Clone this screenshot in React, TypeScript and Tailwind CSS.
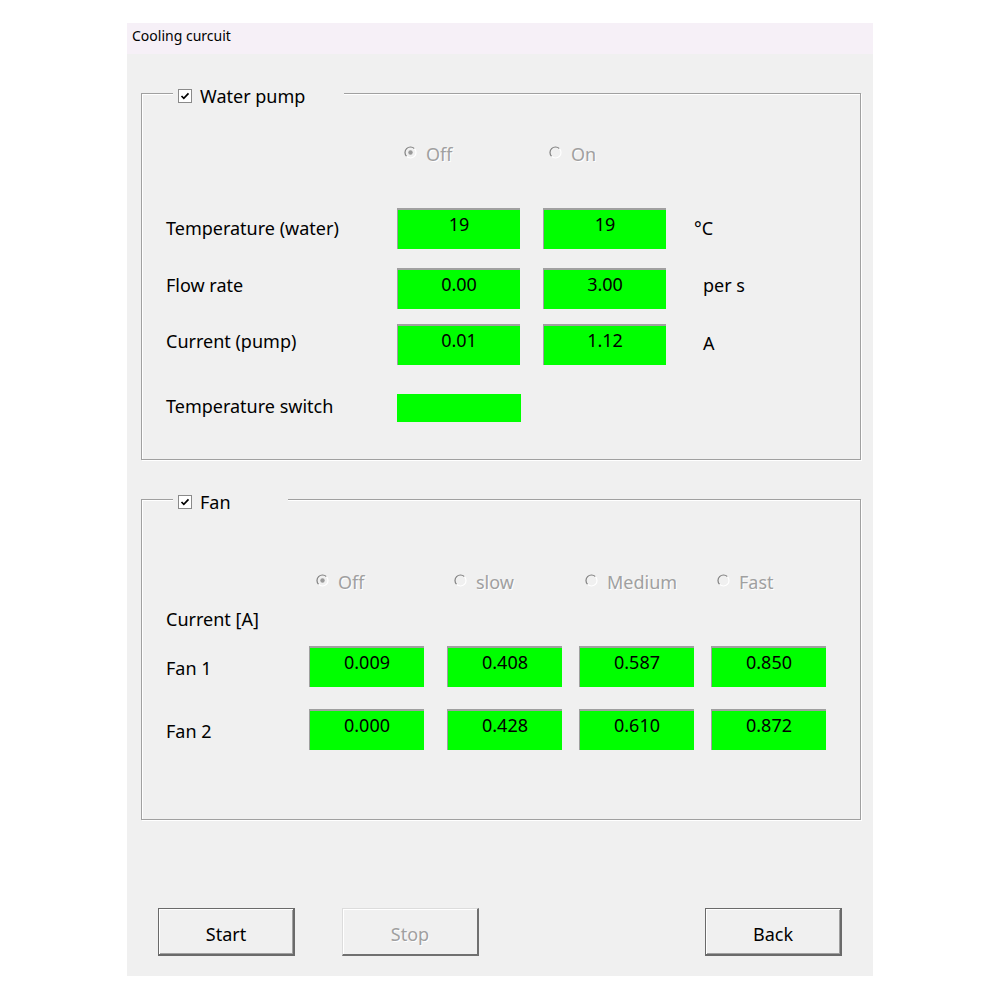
import React from 'react'

const FONT = "font-['Noto_Sans','Open_Sans',sans-serif]"

function Radio({ label, checked = false }: { label: string; checked?: boolean }) {
  return (
    <div className="flex items-center gap-[9px] text-[18px] leading-[24px] text-[#a0a0a0] [text-shadow:1px_1px_0_#fff]">
      <svg width="13" height="13" viewBox="0 0 13 13" className="-mt-[4px]">
        <circle cx="6.5" cy="6.5" r="5.5" fill="#f0f0f0" />
        <path d="M2.6 10.4 A5.5 5.5 0 0 1 10.4 2.6" fill="none" stroke="#808080" strokeWidth="1.2" />
        <path d="M10.4 2.6 A5.5 5.5 0 0 1 2.6 10.4" fill="none" stroke="#ffffff" strokeWidth="1.2" />
        {checked && <circle cx="6.5" cy="6.5" r="2.2" fill="#9a9a9a" />}
      </svg>
      <span>{label}</span>
    </div>
  )
}

function CheckBox() {
  return (
    <svg width="14" height="14" viewBox="0 0 14 14">
      <rect x="0.5" y="0.5" width="13" height="13" fill="#fff" stroke="#8a8a8a" />
      <path d="M3.5 7 L5.8 9.3 L10.5 4.3" fill="none" stroke="#000" strokeWidth="1.7" />
    </svg>
  )
}

function GroupBox({ title, legendW, h, children }: { title: string; legendW: string; h: string; children: React.ReactNode }) {
  return (
    <div className={`relative ${h} border border-[#a0a0a0] shadow-[1px_1px_0_#fff,inset_1px_1px_0_#fff]`}>
      <div className={`absolute -top-[10px] left-[31px] ${legendW} bg-[#f0f0f0] flex items-center gap-[8px] pl-[5px] text-[18px] leading-[24px] text-black`}>
        <CheckBox />
        <span>{title}</span>
      </div>
      {children}
    </div>
  )
}

function Box({ value, w, h = 'h-[41px]' }: { value?: string; w: string; h?: string }) {
  return (
    <div className={`${w} ${h} bg-[#00ff00] border-t-2 border-l border-[#a0a0a0] flex justify-center pt-[2px] text-[18px] leading-[24px] text-black`}>
      {value}
    </div>
  )
}

function Button({ label, disabled = false }: { label: string; disabled?: boolean }) {
  return (
    <button
      className={`w-[137px] h-[48px] bg-[#f0f0f0] pt-[5px] text-[18px] border-t border-l border-b-2 border-r-2 ${
        disabled
          ? 'border-t-[#dcdcdc] border-l-[#dcdcdc] border-b-[#707070] border-r-[#707070] text-[#a0a0a0] [text-shadow:1px_1px_0_#fff] shadow-[inset_1px_1px_0_#fff]'
          : 'border-[#6a6a6a] text-black shadow-[inset_1px_1px_0_#fff,inset_-1px_-1px_0_#a0a0a0]'
      }`}
    >
      {label}
    </button>
  )
}

const pumpRows = [
  { label: 'Temperature (water)', a: '19', b: '19', unit: '°C', unitCls: 'ml-[28px] -mt-[1px]', labelCls: '-mt-[1px]', mt: 'mt-[0px]' },
  { label: 'Flow rate', a: '0.00', b: '3.00', unit: 'per s', unitCls: 'ml-[37px] -mt-[7px]', labelCls: '-mt-[7px]', mt: 'mt-[19px]' },
  { label: 'Current (pump)', a: '0.01', b: '1.12', unit: 'A', unitCls: 'ml-[37px] -mt-[3px]', labelCls: '-mt-[7px]', mt: 'mt-[15px]' },
]

const fanRows = [
  { label: 'Fan 1', values: ['0.009', '0.408', '0.587', '0.850'], mt: 'mt-[0px]' },
  { label: 'Fan 2', values: ['0.000', '0.428', '0.610', '0.872'], mt: 'mt-[22px]' },
]

export default function App() {
  return (
    <div className={`w-[1000px] h-[1000px] bg-white pt-[23px] pl-[127px] ${FONT}`}>
      <div className="w-[746px] h-[953px] bg-[#f0f0f0] flex flex-col">
        <div className="h-[31px] bg-[#f6f0f7] pl-[5px] pt-[3px] text-[14px] leading-[20px] text-black">
          Cooling curcuit
        </div>

        <div className="pl-[14px] pr-[12px] pt-[39px]">
          <GroupBox title="Water pump" legendW="w-[171px]" h="h-[367px]">
            <div className="flex pl-[262px] pt-[48px]">
              <div className="w-[145px]">
                <Radio label="Off" checked />
              </div>
              <Radio label="On" />
            </div>

            <div className="mt-[42px]">
              {pumpRows.map((r) => (
                <div key={r.label} className={`flex items-center h-[41px] ${r.mt} text-[18px] leading-[24px] text-black`}>
                  <div className={`w-[255px] pl-[24px] ${r.labelCls}`}>{r.label}</div>
                  <Box value={r.a} w="w-[123px]" />
                  <div className="w-[23px]" />
                  <Box value={r.b} w="w-[123px]" />
                  <div className={r.unitCls}>{r.unit}</div>
                </div>
              ))}
              <div className="flex items-center h-[28px] mt-[29px] text-[18px] leading-[24px] text-black">
                <div className="w-[255px] pl-[24px] -mt-[4px]">Temperature switch</div>
                <div className="w-[124px] h-[28px] bg-[#00ff00]" />
              </div>
            </div>
          </GroupBox>

          <div className="mt-[39px]">
            <GroupBox title="Fan" legendW="w-[115px]" h="h-[321px]">
              <div className="flex pl-[174px] pt-[70px]">
                <div className="w-[138px]"><Radio label="Off" checked /></div>
                <div className="w-[131px]"><Radio label="slow" /></div>
                <div className="w-[132px]"><Radio label="Medium" /></div>
                <Radio label="Fast" />
              </div>

              <div className="pl-[24px] mt-[13px] text-[18px] leading-[24px] text-black">Current [A]</div>

              <div className="mt-[15px]">
                {fanRows.map((r) => (
                  <div key={r.label} className={`flex items-center h-[41px] ${r.mt} text-[18px] leading-[24px] text-black`}>
                    <div className="w-[167px] pl-[24px] mt-[3px]">{r.label}</div>
                    <Box value={r.values[0]} w="w-[115px]" />
                    <div className="w-[23px]" />
                    <Box value={r.values[1]} w="w-[115px]" />
                    <div className="w-[17px]" />
                    <Box value={r.values[2]} w="w-[115px]" />
                    <div className="w-[17px]" />
                    <Box value={r.values[3]} w="w-[115px]" />
                  </div>
                ))}
              </div>
            </GroupBox>
          </div>
        </div>

        <div className="flex pl-[31px] pt-[88px]">
          <Button label="Start" />
          <div className="w-[47px]" />
          <Button label="Stop" disabled />
          <div className="w-[226px]" />
          <Button label="Back" />
        </div>
      </div>
    </div>
  )
}
